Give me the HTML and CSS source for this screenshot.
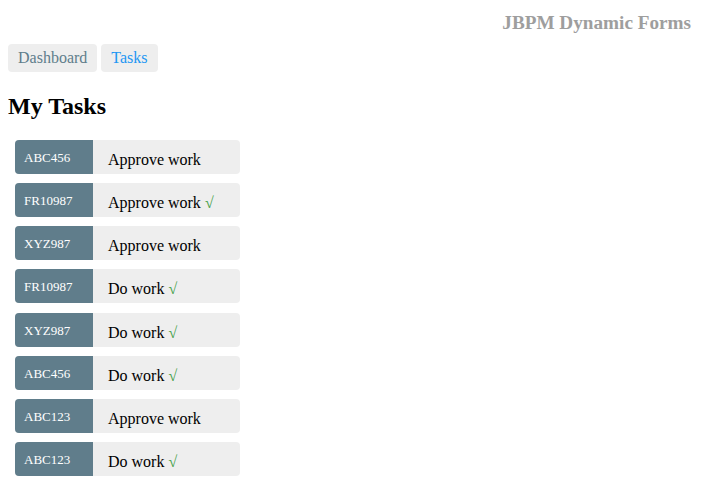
FILE: index.html
```html
<!DOCTYPE html>
<html>
<head>
<meta charset="utf-8">
<link rel="stylesheet" href="styles.css">
</head>
<body>
<header class="top">
  <div class="brand">JBPM Dynamic Forms</div>
</header>
<nav class="nav">
  <a class="nav-btn">Dashboard</a>
  <a class="nav-btn active">Tasks</a>
</nav>
<h2 class="title">My Tasks</h2>
<ul class="tasks">
  <li class="task"><span class="tag">ABC456</span><span class="name">Approve work</span></li>
  <li class="task"><span class="tag">FR10987</span><span class="name">Approve work <span class="done">√</span></span></li>
  <li class="task"><span class="tag">XYZ987</span><span class="name">Approve work</span></li>
  <li class="task"><span class="tag">FR10987</span><span class="name">Do work <span class="done">√</span></span></li>
  <li class="task"><span class="tag">XYZ987</span><span class="name">Do work <span class="done">√</span></span></li>
  <li class="task"><span class="tag">ABC456</span><span class="name">Do work <span class="done">√</span></span></li>
  <li class="task"><span class="tag">ABC123</span><span class="name">Approve work</span></li>
  <li class="task"><span class="tag">ABC123</span><span class="name">Do work <span class="done">√</span></span></li>
</ul>
</body>
</html>
```
FILE: styles.css
```css
html, body {
  background: #ffffff;
}
body {
  margin: 8px;
  font-family: "Liberation Serif", "Times New Roman", serif;
  color: #000;
}
.top {
  display: flex;
  justify-content: flex-end;
  padding: 4px 14px 0 0;
  height: 32px;
  box-sizing: border-box;
}
.brand {
  font-size: 19.2px;
  font-weight: bold;
  color: #9e9e9e;
  line-height: 22px;
}
.nav {
  display: flex;
  gap: 4px;
  margin-top: 4px;
}
.nav-btn {
  display: block;
  background: #eeeeee;
  border-radius: 4px;
  padding: 5px 10px;
  height: 28px;
  box-sizing: border-box;
  font-size: 16px;
  line-height: 18px;
  color: #607d8b;
}
.nav-btn.active {
  color: #2196f3;
}
.title {
  font-size: 24px;
  font-weight: bold;
  margin: 20px 0 0 0;
  line-height: 28px;
}
.tasks {
  list-style: none;
  margin: 20px 0 0 0;
  padding: 0 0 0 7px;
  display: flex;
  flex-direction: column;
  gap: 9.15px;
}
.task {
  display: flex;
  width: 225px;
  height: 34px;
  background: #eeeeee;
  border-radius: 4px;
  overflow: hidden;
}
.tag {
  width: 78px;
  box-sizing: border-box;
  background: #607d8b;
  color: #ffffff;
  font-size: 13px;
  line-height: 15px;
  padding: 10px 0 0 9px;
}
.name {
  font-size: 16px;
  line-height: 18px;
  padding: 11px 0 0 15px;
}
.done {
  color: #43a047;
}
```
